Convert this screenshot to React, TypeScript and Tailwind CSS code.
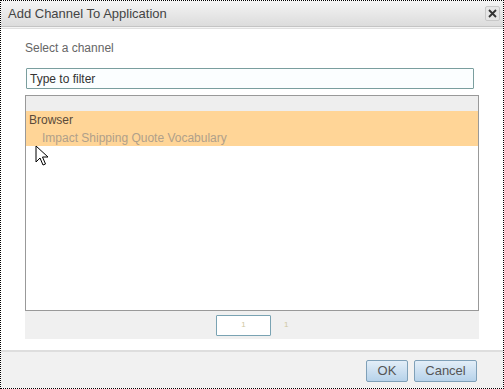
import React from 'react';

const FONT = { fontFamily: '"Liberation Sans", Arial, sans-serif' };

function Cursor() {
  return (
    <svg width="14" height="22" viewBox="0 0 14 22" className="absolute left-[34px] top-[144px]">
      <path d="M1 1 L1 17 L5 13 L8 20 L10.5 19 L7.5 12 L13 12 Z" fill="#fff" stroke="#000" strokeWidth="1" strokeLinejoin="miter" />
    </svg>
  );
}

export default function App() {
  return (
    <div className="relative w-[504px] h-[389px] border border-dotted border-black bg-white text-[12px]" style={FONT}>
      {/* Title bar */}
      <div className="flex items-center justify-between h-[26px] pl-[7px] pr-[3px] bg-gradient-to-b from-[#f4f4f4] to-[#dcdcdc] border-b border-[#c4c4c4]">
        <span className="text-[13px] text-[#444]">Add Channel To Application</span>
        <button className="w-[15px] h-[15px] flex items-center justify-center rounded-[2px] border border-[#c8c8c8] bg-[#e6e6e6] text-[#333]">
          <svg width="9" height="9" viewBox="0 0 9 9"><path d="M1 1 L8 8 M8 1 L1 8" stroke="#333" strokeWidth="1.8" /></svg>
        </button>
      </div>
      <div className="h-[2px] bg-[#f4f4f4] border-b border-[#e0e0e0]" />

      {/* Body */}
      <div className="pl-[24px] pr-[24px] pt-[11px] h-[320px]">
        <div className="text-[#666] leading-[16px]">Select a channel</div>
        <div className="mt-[12px] ml-[1px] w-[448px] h-[21px] border border-[#7a9e9e] bg-[#fbfeff] rounded-[1px] flex items-center pl-[3px] text-[#333]">
          Type to filter
        </div>
        <div className="mt-[6px] w-[454px] h-[216px] border border-[#999] bg-white">
          <div className="h-[15px] bg-[#eeeeee]" />
          <div className="bg-[#ffd597] h-[35px] pt-[1px]">
            <div className="pl-[3px] text-[#5a4a3a] leading-[17px]">Browser</div>
            <div className="pl-[16px] text-[#b0a08a] leading-[18px]">Impact Shipping Quote Vocabulary</div>
          </div>
        </div>
        <div className="w-[454px] h-[28px] bg-[#f0f0f0] flex items-center">
          <div className="ml-[191px] w-[55px] h-[21px] border border-[#7aa3b3] bg-white rounded-[1px] flex items-center justify-center text-[8px] text-[#cfc7a0]">1</div>
          <span className="ml-[13px] text-[8px] text-[#cfc7a0]">1</span>
        </div>
      </div>

      {/* Footer */}
      <div className="absolute left-0 right-0 bottom-0 h-[38px] border-t-2 border-[#dedede] bg-[#f1f1f1] flex items-center justify-end gap-[6px] pr-[26px] pt-[1px]">
        <button className="w-[42px] h-[22px] rounded-[2px] border border-[#7fa0b8] bg-gradient-to-b from-[#e3eef8] to-[#b6d2ea] text-[13px] text-[#555]">OK</button>
        <button className="w-[63px] h-[22px] rounded-[2px] border border-[#7fa0b8] bg-gradient-to-b from-[#e3eef8] to-[#b6d2ea] text-[13px] text-[#555]">Cancel</button>
      </div>

      <Cursor />
    </div>
  );
}
